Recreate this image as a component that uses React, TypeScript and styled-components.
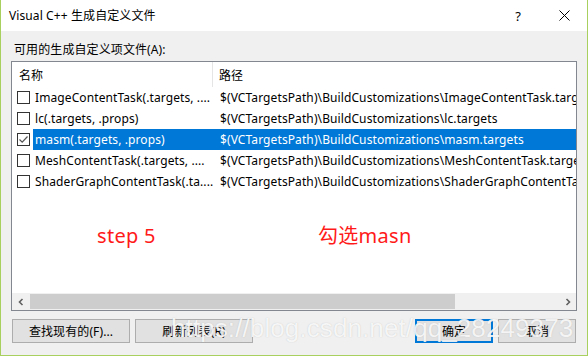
import React from "react";
import styled, { createGlobalStyle } from "styled-components";

const GlobalStyle = createGlobalStyle`
  html, body { margin: 0; padding: 0; background: #ffffff; }
  * { box-sizing: border-box; }
`;

const UI_FONT = `"Noto Sans", "Noto Sans CJK SC", sans-serif`;

const Window = styled.div`
  position: relative;
  width: 588px;
  height: 356px;
  display: flex;
  flex-direction: column;
  border-left: 1px solid #a7d05f;
  border-right: 1px solid #a7d05f;
  border-bottom: 1px solid #a7d05f;
  font-family: ${UI_FONT};
  font-size: 12px;
  letter-spacing: 0.1px;
  color: #000;
  overflow: hidden;
`;

const TitleBar = styled.div`
  height: 31px;
  flex: none;
  background: #ffffff;
  display: flex;
  align-items: center;
  padding-left: 8px;
`;

const TitleText = styled.div`
  flex: 1;
  font-size: 12px;
  line-height: 16px;
`;

const TitleButton = styled.div`
  width: 46px;
  height: 31px;
  display: flex;
  align-items: center;
  justify-content: center;
  font-size: 13px;
`;

const Body = styled.div`
  flex: 1;
  background: #f0f0f0;
  display: flex;
  flex-direction: column;
  padding: 0 10px;
`;

const Label = styled.div`
  padding-top: 10px;
  margin-bottom: 3px;
  line-height: 17px;
  padding-left: 3px;
`;

const ListBox = styled.div`
  position: relative;
  height: 250px;
  border: 1px solid #828790;
  background: #ffffff;
  display: flex;
  flex-direction: column;
`;

const Header = styled.div`
  height: 25px;
  display: flex;
  align-items: stretch;
  flex: none;
`;

const HeaderCell = styled.div<{ $w?: number }>`
  ${(p) => (p.$w ? `width: ${p.$w}px; flex: none;` : "flex: 1;")}
  display: flex;
  align-items: center;
  padding-left: ${(p) => (p.$w ? 7 : 6)}px;
  border-right: ${(p) => (p.$w ? "1px solid #e5e5e5" : "none")};
`;

const Rows = styled.div`
  flex: 1;
`;

const Row = styled.div`
  height: 21px;
  display: flex;
  align-items: stretch;
`;

const CheckCell = styled.div`
  width: 21px;
  flex: none;
  display: flex;
  align-items: center;
  padding-left: 5px;
`;

const CheckBox = styled.div`
  width: 13px;
  height: 13px;
  border: 1px solid #333333;
  background: #ffffff;
  display: flex;
  align-items: center;
  justify-content: center;
`;

const RowContent = styled.div<{ $selected?: boolean }>`
  flex: 1;
  display: flex;
  align-items: center;
  min-width: 0;
  background: ${(p) => (p.$selected ? "#0078d7" : "transparent")};
  color: ${(p) => (p.$selected ? "#ffffff" : "#000000")};
`;

const NameCell = styled.div`
  width: 180px;
  flex: none;
  padding-left: 2px;
  white-space: nowrap;
  overflow: hidden;
`;

const PathCell = styled.div`
  flex: 1;
  min-width: 0;
  padding-left: 7px;
  white-space: nowrap;
  overflow: hidden;
`;

const HScroll = styled.div`
  height: 17px;
  flex: none;
  background: #f0f0f0;
  display: flex;
  align-items: center;
`;

const ScrollArrow = styled.div`
  width: 17px;
  height: 17px;
  flex: none;
  display: flex;
  align-items: center;
  justify-content: center;
`;

const ScrollTrack = styled.div`
  flex: 1;
  height: 15px;
`;

const ScrollThumb = styled.div`
  height: 15px;
  background: #cdcdcd;
  margin-left: 1px;
`;

const Annotation = styled.div<{ $left: number }>`
  position: absolute;
  left: ${(p) => p.$left}px;
  top: 161px;
  color: #ff1a1a;
  font-size: 20px;
  letter-spacing: 0.3px;
  line-height: 26px;
  white-space: nowrap;
`;

const ButtonRow = styled.div`
  display: flex;
  margin-top: 8px;
  padding: 0 1px;
  gap: 5px;
`;

const Spacer = styled.div`
  flex: 1;
`;

const Button = styled.div<{ $w: number; $focused?: boolean }>`
  width: ${(p) => p.$w}px;
  height: 24px;
  background: #e1e1e1;
  border: ${(p) => (p.$focused ? "2px solid #0078d7" : "1px solid #adadad")};
  display: flex;
  align-items: center;
  justify-content: center;
  white-space: nowrap;
`;

const Watermark = styled.div`
  position: absolute;
  left: 170px;
  top: 315px;
  font-family: "Liberation Sans", Arial, sans-serif;
  font-size: 26px;
  line-height: 26px;
  letter-spacing: 0.1px;
  color: rgba(255, 255, 255, 0.85);
  text-shadow: 0 0 1px rgba(150, 150, 150, 0.5);
  white-space: nowrap;
  pointer-events: none;
`;

const rows = [
  { name: "ImageContentTask(.targets, ....", path: "$(VCTargetsPath)\\BuildCustomizations\\ImageContentTask.targets", checked: false },
  { name: "lc(.targets, .props)", path: "$(VCTargetsPath)\\BuildCustomizations\\lc.targets", checked: false },
  { name: "masm(.targets, .props)", path: "$(VCTargetsPath)\\BuildCustomizations\\masm.targets", checked: true },
  { name: "MeshContentTask(.targets, ....", path: "$(VCTargetsPath)\\BuildCustomizations\\MeshContentTask.targets", checked: false },
  { name: "ShaderGraphContentTask(.ta....", path: "$(VCTargetsPath)\\BuildCustomizations\\ShaderGraphContentTask.targets", checked: false },
];

const Check = () => (
  <svg width="11" height="11" viewBox="0 0 11 11">
    <path d="M1.5 5.5 L4.2 8.2 L9.5 2.5" fill="none" stroke="#555" strokeWidth="1.2" />
  </svg>
);

export default function App() {
  return (
    <>
      <GlobalStyle />
      <Window>
        <TitleBar>
          <TitleText>Visual C++ 生成自定义文件</TitleText>
          <TitleButton>?</TitleButton>
          <TitleButton>
            <svg width="11" height="11" viewBox="0 0 11 11">
              <path d="M0.5 0.5 L10.5 10.5 M10.5 0.5 L0.5 10.5" stroke="#000" strokeWidth="1" />
            </svg>
          </TitleButton>
        </TitleBar>
        <Body>
          <Label>可用的生成自定义项文件(A):</Label>
          <ListBox>
            <Header>
              <HeaderCell $w={201}>名称</HeaderCell>
              <HeaderCell>路径</HeaderCell>
            </Header>
            <Rows>
              {rows.map((r) => (
                <Row key={r.name}>
                  <CheckCell>
                    <CheckBox>{r.checked && <Check />}</CheckBox>
                  </CheckCell>
                  <RowContent $selected={r.checked}>
                    <NameCell>{r.name}</NameCell>
                    <PathCell>{r.path}</PathCell>
                  </RowContent>
                </Row>
              ))}
            </Rows>
            <HScroll>
              <ScrollArrow>
                <svg width="8" height="8" viewBox="0 0 8 8">
                  <path d="M5.5 1 L2.5 4 L5.5 7" fill="none" stroke="#606060" strokeWidth="1.6" />
                </svg>
              </ScrollArrow>
              <ScrollTrack>
                <ScrollThumb style={{ width: 425 }} />
              </ScrollTrack>
              <ScrollArrow>
                <svg width="8" height="8" viewBox="0 0 8 8">
                  <path d="M2.5 1 L5.5 4 L2.5 7" fill="none" stroke="#606060" strokeWidth="1.6" />
                </svg>
              </ScrollArrow>
            </HScroll>
            <Annotation $left={85}>step 5</Annotation>
            <Annotation $left={306}>勾选masn</Annotation>
          </ListBox>
          <ButtonRow>
            <Button $w={118}>查找现有的(F)...</Button>
            <Button $w={118}>刷新列表(R)</Button>
            <Spacer />
            <Button $w={78} $focused>确定</Button>
            <Button $w={78}>取消</Button>
          </ButtonRow>
        </Body>
        <Watermark>https://blog.csdn.net/qq_28249373</Watermark>
      </Window>
    </>
  );
}
